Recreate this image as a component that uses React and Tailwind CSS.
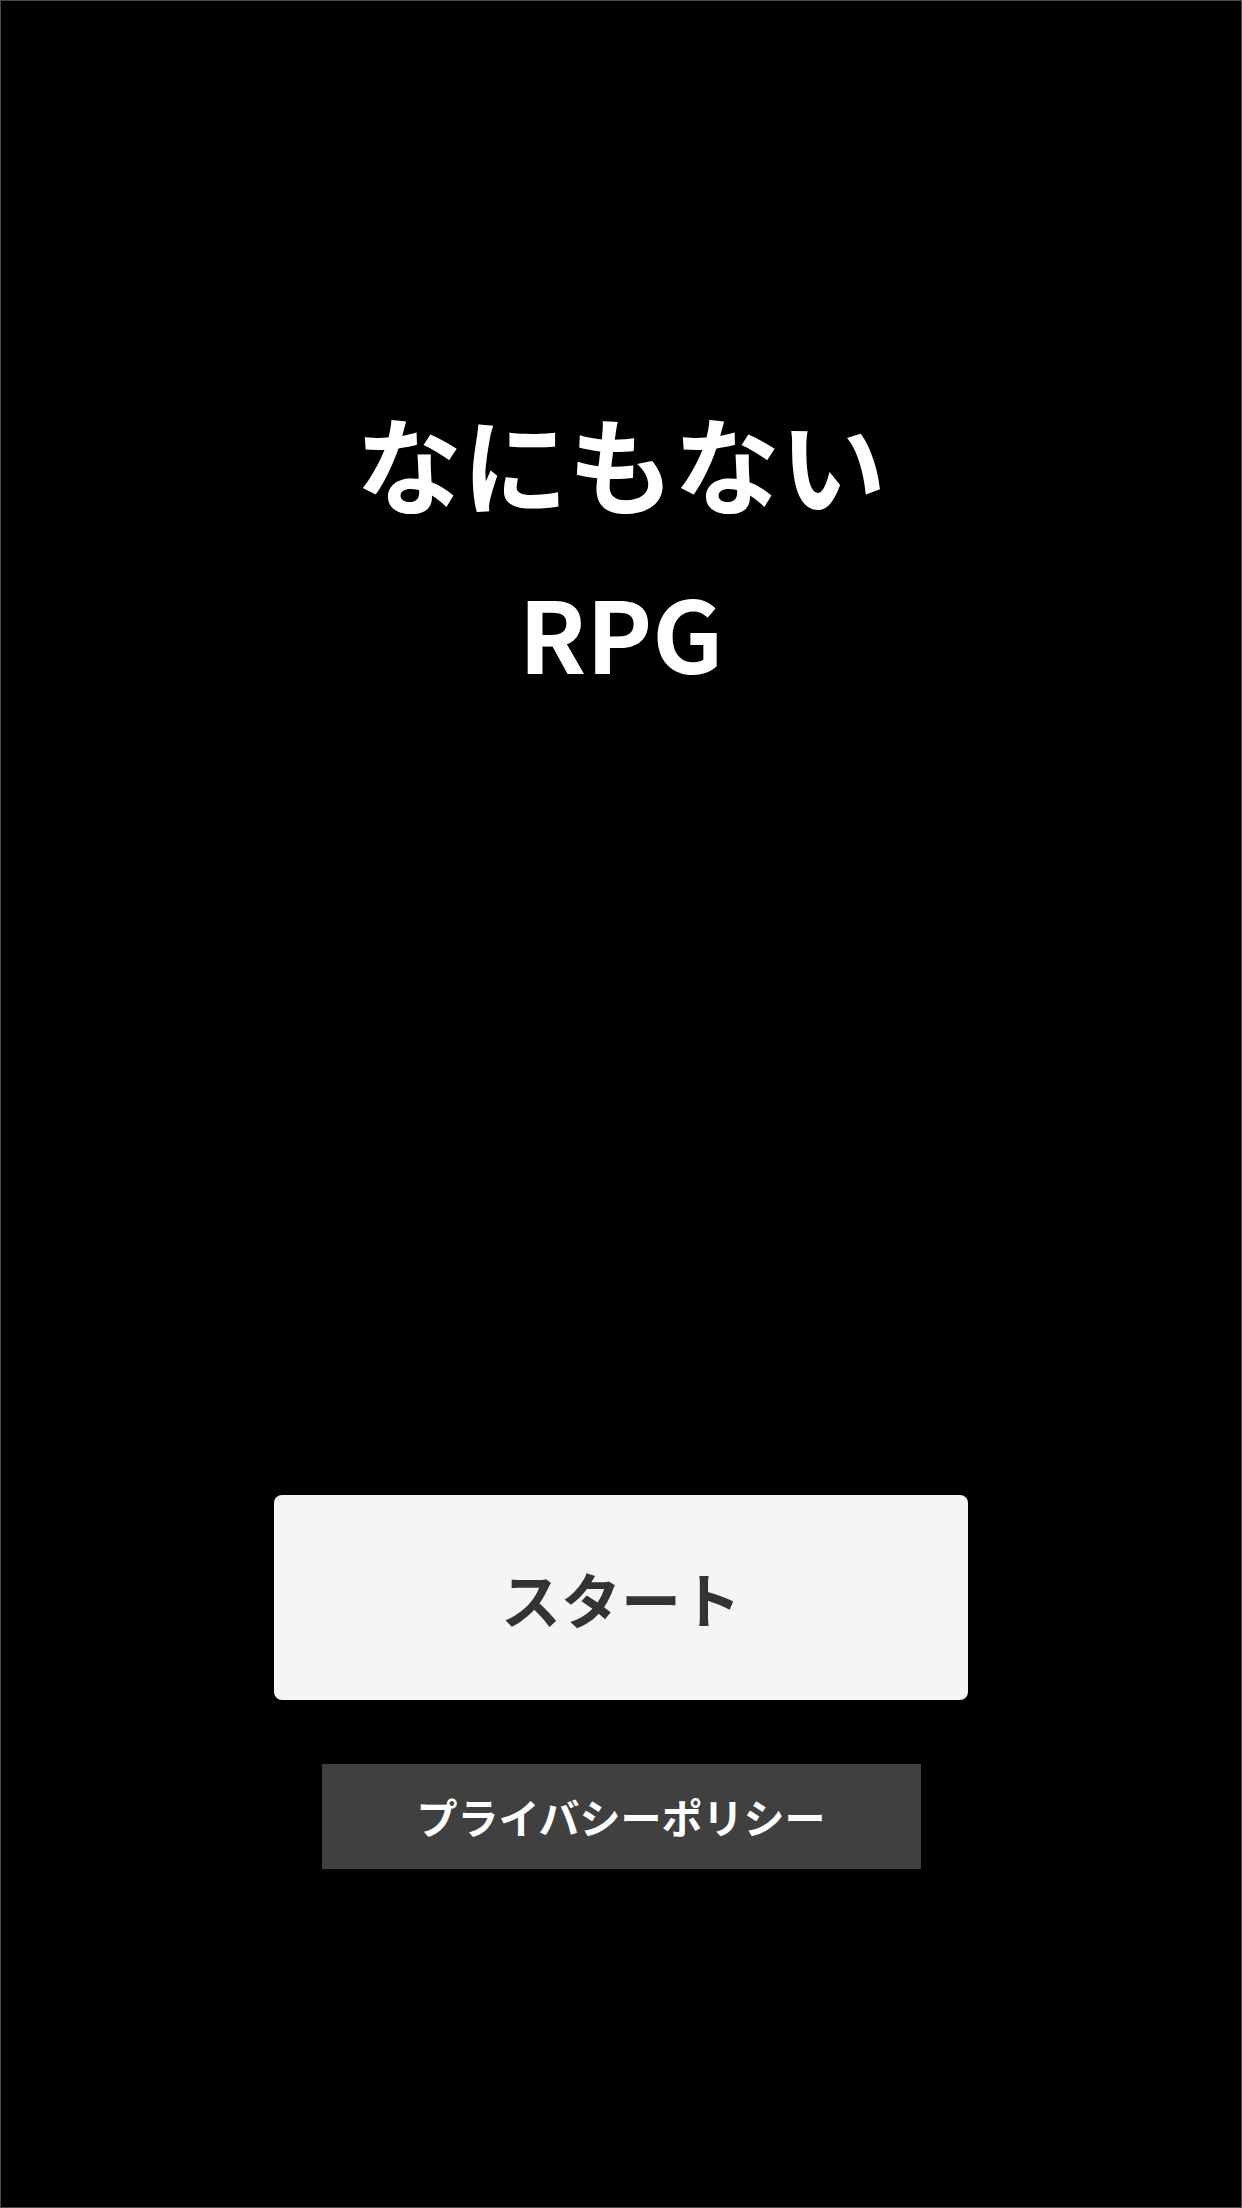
import React from 'react'

export default function App() {
    return (
        <div
            className="w-[1242px] h-[2208px] bg-black border border-[#4a4a4a] flex flex-col items-center"
            style={{ fontFamily: '"Noto Sans CJK JP", "Noto Sans", sans-serif' }}
        >
            {/* タイトル */}
            <h1 className="mt-[375px] text-white font-bold text-center">
                <span className="block text-[106px] leading-[170px]">なにもない</span>
                <span className="block text-[99px] leading-[170px]">RPG</span>
            </h1>

            {/* メニュー */}
            <div className="mt-[779px] flex flex-col items-center">
                <button className="w-[694px] h-[205px] rounded-[8px] bg-[#f5f5f5] text-[#333333] text-[60px] font-bold flex items-center justify-center">
                    スタート
                </button>
                <button className="mt-[64px] w-[599px] h-[105px] bg-[#404040] text-white text-[41px] font-bold flex items-center justify-center">
                    プライバシーポリシー
                </button>
            </div>
        </div>
    )
}
